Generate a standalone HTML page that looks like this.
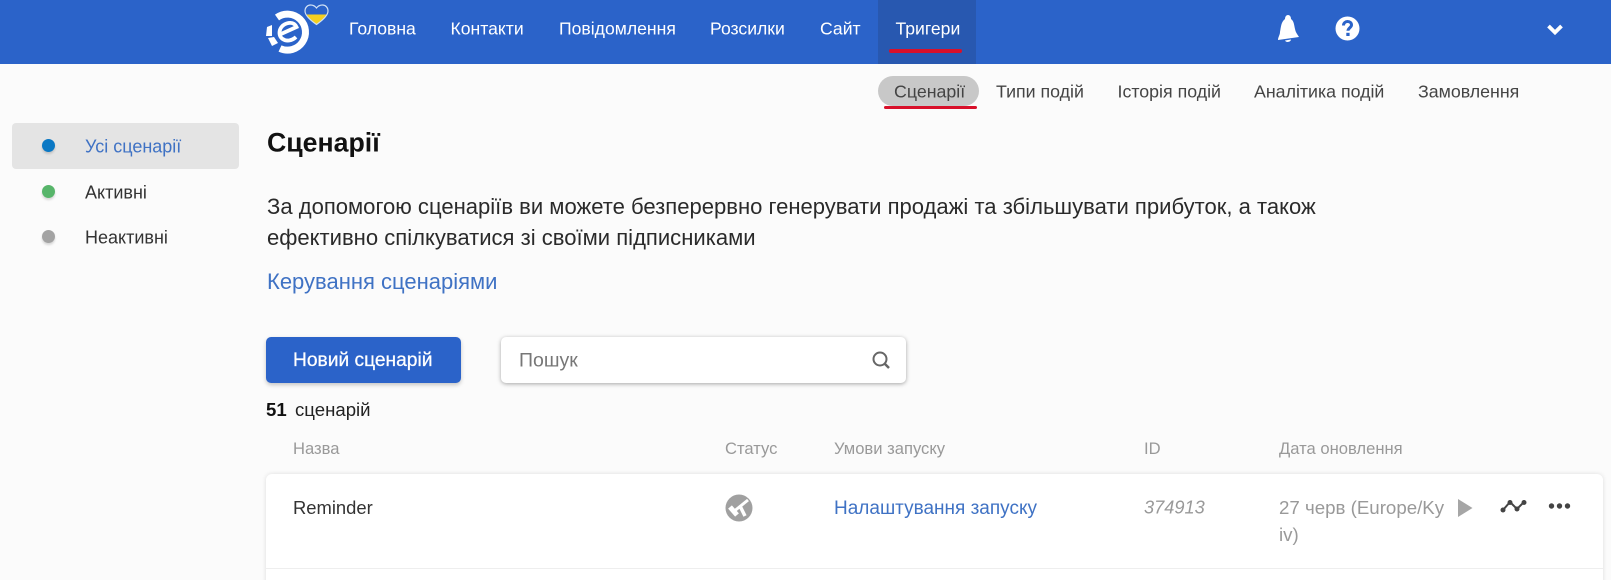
<!DOCTYPE html>
<html lang="uk">
<head>
<meta charset="utf-8">
<style>
html,body{margin:0;padding:0;width:1611px;height:580px;overflow:hidden;background:#fbfbfb;font-family:"Liberation Sans",sans-serif;color:#222}
#r{position:relative;width:1611px;height:580px;overflow:hidden;filter:blur(.35px)}
.a{position:absolute;white-space:nowrap;transform:translateY(-50%)}
.b{position:absolute}
.nav{color:#fff;font-size:17.6px;top:29px}
.sub{color:#444;font-size:17.8px;top:91.5px}
.side{font-size:18px;color:#333;left:85px}
.dot{position:absolute;left:42px;width:13px;height:13px;border-radius:50%;box-shadow:0 2px 2px rgba(0,0,0,.15)}
.th{color:#999;font-size:16.6px;top:449px}
</style>
</head>
<body>
<div id="r">
<div class="b" style="left:0;top:0;width:1611px;height:64px;background:#2b63c9"></div>
<div class="b" style="left:878px;top:0;width:98px;height:64px;background:#2858b0"></div>
<div class="b" style="left:889px;top:49px;width:73px;height:4px;background:#d8102a;border-radius:2px"></div>

<svg class="b" style="left:260px;top:0" width="75" height="60" viewBox="0 0 75 60">
<path d="M17 17.500A18 18 0 1 1 20 48.500" fill="none" stroke="#fff" stroke-width="7"/>
<path d="M21 34L36.500 27C35 23.500 32 22.500 28.500 23C23 24 19.500 28 19.500 33C19.500 38 24 41 29 40.500C32 40 34 39 36 37" fill="none" stroke="#fff" stroke-width="3.800"/>
<path d="M7 27L12 25L12 36L6 36Z M8 38L14 37L18 43L12 46Z" fill="#fff"/>
<path d="M45.500 12C44.500 9 47 5.500 50.500 5.500C53 5.500 55 6.500 56.500 8.500C58 6.500 60 5.500 62.500 5.500C66 5.500 68.500 9 67.500 12Z" fill="#2b63c9"/>
<path d="M46 14.500H67C65 18 60 21.500 56.500 24.500C53 21.500 48 18 46 14.500Z" fill="#f5d020"/>
<path d="M56.500 24.500C50 20 45 15.500 45 11C45 7.500 47.500 5 50.500 5C53 5 55 6 56.500 8C58 6 60 5 62.500 5C65.500 5 68 7.500 68 11C68 15.500 63 20 56.500 24.500Z" fill="none" stroke="#cfe0f5" stroke-width="1.200"/>
</svg>

<div class="a nav" style="left:349px">Головна</div>
<div class="a nav" style="left:450.500px">Контакти</div>
<div class="a nav" style="left:559px">Повідомлення</div>
<div class="a nav" style="left:710px">Розсилки</div>
<div class="a nav" style="left:820px">Сайт</div>
<div class="a nav" style="left:895.500px">Тригери</div>

<svg class="b" style="left:1275px;top:13px" width="26" height="30" viewBox="0 0 26 30">
<path d="M13 2C15 2 16 4 16 6C19 8 19 12 20 16C20.500 19 22 21 24 24L3 27C3 24 5 22 5 19C6 14 6 9 10 6C10 4 11 2 13 2Z" fill="#fff"/>
<path d="M10 27.500L16 26.500C16 29 11 30 10 27.500Z" fill="#fff"/>
</svg>
<svg class="b" style="left:1335px;top:16px" width="25" height="25" viewBox="0 0 25 25">
<circle cx="12.500" cy="12.500" r="12" fill="#fff"/>
<path d="M8.500 9.500C8.500 7 10.500 5.500 12.500 5.500C15 5.500 16.500 7 16.500 9C16.500 11.500 13 12 13 14.800" fill="none" stroke="#2b63c9" stroke-width="3"/>
<rect x="11.300" y="16.800" width="3.300" height="3.200" fill="#2b63c9"/>
</svg>
<svg class="b" style="left:1546px;top:23px" width="18" height="13" viewBox="0 0 18 13">
<path d="M2.500 3L9 9.500L15.500 3" fill="none" stroke="#fff" stroke-width="3.800"/>
</svg>

<div class="b" style="left:878px;top:76px;width:101px;height:29.500px;border-radius:15px;background:#c8c8c8"></div>
<div class="b" style="left:884px;top:106px;width:93px;height:3px;background:#d8102a;border-radius:2px"></div>
<div class="a sub" style="left:894px">Сценарії</div>
<div class="a sub" style="left:996px">Типи подій</div>
<div class="a sub" style="left:1117.500px">Історія подій</div>
<div class="a sub" style="left:1254px">Аналітика подій</div>
<div class="a sub" style="left:1418px">Замовлення</div>

<div class="b" style="left:12px;top:123px;width:227px;height:46px;background:#e4e4e4;border-radius:4px"></div>
<div class="dot" style="top:139px;background:#0a78c4"></div>
<div class="dot" style="top:185px;background:#57b56a"></div>
<div class="dot" style="top:230px;background:#a3a3a3"></div>
<div class="a side" style="top:147px;color:#3f72c4">Усі сценарії</div>
<div class="a side" style="top:193px">Активні</div>
<div class="a side" style="top:238px">Неактивні</div>

<div class="a" style="left:267px;top:143px;font-size:26.700px;font-weight:700;color:#111">Сценарії</div>
<div class="a" style="left:267px;top:206.500px;font-size:22.050px;color:#2a2a2a">За допомогою сценаріїв ви можете безперервно генерувати продажі та збільшувати прибуток, а також</div>
<div class="a" style="left:267px;top:237.500px;font-size:22.050px;color:#2a2a2a">ефективно спілкуватися зі своїми підписниками</div>
<div class="a" style="left:267px;top:281.500px;font-size:22px;color:#3f72c4">Керування сценаріями</div>

<div class="b" style="left:266px;top:337px;width:195px;height:46px;background:#2b63c9;border-radius:5px;box-shadow:0 2px 4px rgba(0,0,0,.22)"></div>
<div class="a" style="left:293px;top:360.500px;font-size:19.200px;color:#fff;-webkit-text-stroke:.25px #fff">Новий сценарій</div>
<div class="b" style="left:501px;top:337px;width:405px;height:46px;background:#fff;border-radius:5px;box-shadow:0 1px 4px rgba(0,0,0,.35)"></div>
<div class="a" style="left:519px;top:361px;font-size:19.500px;color:#777">Пошук</div>
<svg class="b" style="left:870px;top:349px" width="22" height="22" viewBox="0 0 22 22">
<circle cx="10" cy="10" r="6.500" fill="none" stroke="#666" stroke-width="2"/>
<path d="M14.500 14.500L19 19" stroke="#666" stroke-width="2.500"/>
</svg>

<div class="a" style="left:266px;top:410px;font-size:18.600px;font-weight:700;color:#111">51</div>
<div class="a" style="left:295px;top:410px;font-size:18.600px;color:#222">сценарій</div>

<div class="a th" style="left:293px">Назва</div>
<div class="a th" style="left:725px">Статус</div>
<div class="a th" style="left:834px">Умови запуску</div>
<div class="a th" style="left:1144px">ID</div>
<div class="a th" style="left:1279px">Дата оновлення</div>

<div class="b" style="left:266px;top:474px;width:1337px;height:120px;background:#fff;border-radius:6px 6px 0 0;box-shadow:0 0 5px rgba(0,0,0,.12)"></div>
<div class="b" style="left:266px;top:568px;width:1337px;height:1px;background:#eee"></div>

<div class="a" style="left:293px;top:508px;font-size:18.400px;color:#333">Reminder</div>
<svg class="b" style="left:724.500px;top:494px" width="28" height="28" viewBox="0 0 28 28">
<circle cx="14" cy="14" r="13.500" fill="#a0a0a0"/>
<path d="M5 13L12 21" stroke="#fff" stroke-width="5"/>
<path d="M10 16.500L23 6" stroke="#fff" stroke-width="3"/>
<path d="M15 12L20 22" stroke="#fff" stroke-width="3.500"/>
</svg>
<div class="a" style="left:834px;top:509px;font-size:19px;color:#3f72c4">Налаштування запуску</div>
<div class="a" style="left:1144px;top:508px;font-size:18.200px;font-style:italic;color:#999">374913</div>
<div class="a" style="left:1279px;top:508px;font-size:18.700px;color:#999">27 черв (Europe/Ky</div>
<div class="a" style="left:1279px;top:535px;font-size:18.700px;color:#999">iv)</div>
<svg class="b" style="left:1458px;top:498px" width="15" height="20" viewBox="0 0 15 20"><path d="M0 1L14.500 10L0 19Z" fill="#a6a6a6"/></svg>
<svg class="b" style="left:1500px;top:498px" width="27" height="18" viewBox="0 0 27 18">
<path d="M3 12L10 4L17 11L24 4" fill="none" stroke="#444" stroke-width="2"/>
<circle cx="3" cy="12" r="2.500" fill="#444"/><circle cx="10" cy="4.500" r="2.500" fill="#444"/><circle cx="17" cy="11" r="2.500" fill="#444"/><circle cx="24" cy="4.500" r="2.500" fill="#444"/>
</svg>
<svg class="b" style="left:1548px;top:501px" width="23" height="10" viewBox="0 0 23 10">
<circle cx="3.500" cy="5" r="2.700" fill="#444"/><circle cx="11.500" cy="5" r="2.700" fill="#444"/><circle cx="19.500" cy="5" r="2.700" fill="#444"/>
</svg>
</div>
</body>
</html>
